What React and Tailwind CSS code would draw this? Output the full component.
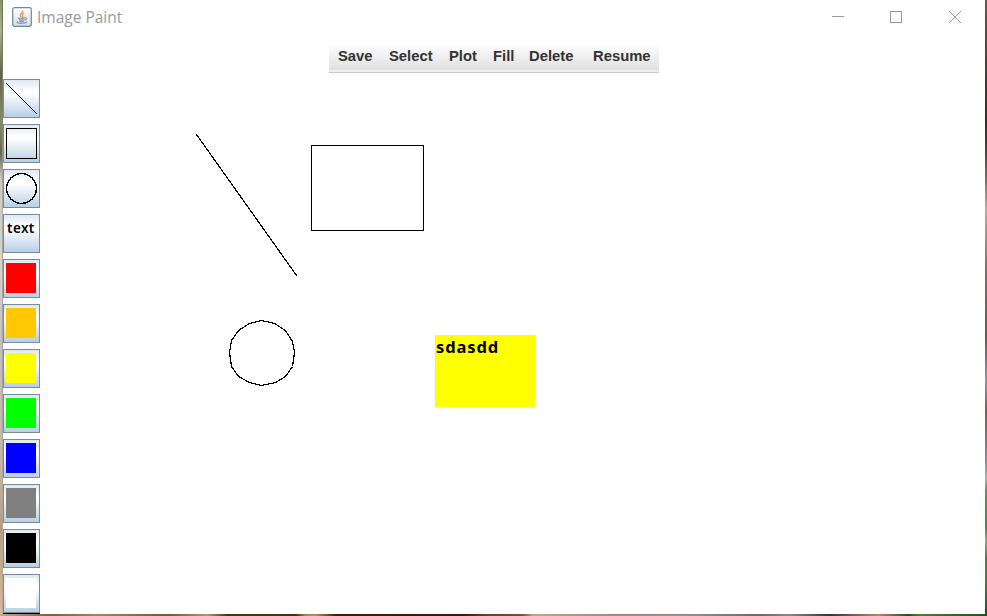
import React from "react";

const menuItems = [
  ["Save", "w-[51px]"],
  ["Select", "w-[60px]"],
  ["Plot", "w-[44px]"],
  ["Fill", "w-[36px]"],
  ["Delete", "w-[64px]"],
  ["Resume", "w-[59px]"],
];

const swatches = [
  ["Red", "bg-[#ff0000]"],
  ["Orange", "bg-[#ffc800]"],
  ["Yellow", "bg-[#ffff00]"],
  ["Green", "bg-[#00ff00]"],
  ["Blue", "bg-[#0000ff]"],
  ["Gray", "bg-[#808080]"],
  ["Black", "bg-black"],
  ["White", "bg-white"],
];

function ToolButton({ label, children }) {
  return (
    <button
      aria-label={label}
      className="flex h-[39px] w-[37px] shrink-0 items-start border border-[#7a8a99] bg-[linear-gradient(180deg,#dde8f3_0%,#ffffff_30%,#ffffff_36%,#b8cfe5_100%)] pl-[2px] pt-[3px] text-left"
    >
      {children}
    </button>
  );
}

function JavaIcon() {
  return (
    <svg width="20" height="20" viewBox="0 0 20 20" fill="none" className="shrink-0">
      <defs>
        <linearGradient id="tile" x1="0" y1="0" x2="0" y2="1">
          <stop stopColor="#ffffff" />
          <stop offset="1" stopColor="#d5dde4" />
        </linearGradient>
      </defs>
      <rect x=".7" y=".7" width="18.6" height="18.6" rx="2" fill="url(#tile)" stroke="#708999" strokeWidth="1.2" />
      <path d="M10.8 3.5c.7 2.2-3.7 3-2.3 5.3l1 1.5M12.2 6c-2.5 1.2-2.5 1.9-1.4 3.2.5.7 0 1.1-.5 1.6" stroke="#ed934d" strokeWidth="1.3" />
      <path d="M6 10.8c-1 .8 6.3.8 7.2 0M7 12.4c.5 1 4.7 1 5.5.2M7.3 14c.8.9 3.6.8 4.5.2M13.3 10.7c2.2-.2 1.6 2.2-.5 2.4M5.7 14.5c-3 1.3 2 2 6 1.6 2.4-.2 3.5-.8 2.8-1.3" stroke="#55829f" strokeWidth="1" />
    </svg>
  );
}

function TitleBar() {
  return (
    <header className="flex h-[34px] shrink-0 items-center pl-[9px] text-[#999999]">
      <JavaIcon />
      <h1 className="ml-[5px] whitespace-nowrap font-['Open_Sans','Noto_Sans',sans-serif] text-[15.5px] leading-5">
        Image Paint
      </h1>
      <div className="ml-auto flex items-center pr-[24px]">
        <svg className="mr-[46px]" width="12" height="12" shapeRendering="crispEdges"><path d="M0 5.5h12" stroke="currentColor" /></svg>
        <svg className="mr-[47px]" width="12" height="12" shapeRendering="crispEdges"><rect x=".5" y=".5" width="11" height="11" fill="none" stroke="currentColor" /></svg>
        <svg width="12" height="12"><path d="M0 0l12 12M12 0L0 12" stroke="currentColor" /></svg>
      </div>
    </header>
  );
}

export default function App() {
  return (
    <div className="flex h-[616px] w-[987px] flex-col overflow-hidden bg-white">
      <div className="flex h-[614px] shrink-0">
        <div className="w-[2px] bg-[linear-gradient(180deg,#7e9862_0%,#a6b18e_5%,#626249_12%,#8a8a6a_20%,#65664e_25%,#c8c8bf_29%,#d6d4cc_42%,#c2c0b9_56%,#c5b7a6_75%,#b89e80_86%,#d7b996_100%)]" />
        <div className="w-px bg-[linear-gradient(180deg,#657456_0%,#858573_20%,#aaa9a4_30%,#a3a3a0_60%,#b9a993_100%)]" />
        <main className="flex w-[982px] flex-col bg-white">
          <TitleBar />
          <nav className="ml-[326px] mt-[9px] flex h-[30px] w-[330px] shrink-0 items-start border-b border-[#c8c8c8] bg-[linear-gradient(180deg,#ffffff_0px,#dfdfdf_27px,#eeeeee_27px,#eeeeee_29px)] pl-[9px] pt-[4px] font-['Liberation_Sans',Arial,sans-serif] text-[14.8px] font-bold leading-[18px] text-[#333333]">
            {menuItems.map(([label, width]) => (
              <span key={label} className={"shrink-0 " + width}>{label}</span>
            ))}
          </nav>
          <div className="mt-[6px] flex h-[535px]">
            <aside className="flex w-[37px] shrink-0 flex-col">
              <div className="flex flex-col gap-[6px]">
                <ToolButton label="Line">
                  <svg width="32" height="32" shapeRendering="crispEdges"><path d="M.5 .5l30.6 30.6" stroke="#000" /></svg>
                </ToolButton>
                <ToolButton label="Rectangle">
                  <svg width="32" height="32" shapeRendering="crispEdges"><rect x=".5" y=".5" width="30" height="30" fill="none" stroke="#000" /></svg>
                </ToolButton>
                <ToolButton label="Circle">
                  <svg width="32" height="32" shapeRendering="crispEdges"><circle cx="15.5" cy="15.5" r="14.9" fill="none" stroke="#000" strokeWidth="1.4" /></svg>
                </ToolButton>
                <ToolButton label="Text">
                  <span className="pl-px pt-[3px] font-['Noto_Sans',sans-serif] text-[13.5px] font-semibold leading-[14px] tracking-[0.4px] text-black">text</span>
                </ToolButton>
                {swatches.map(([label, color]) => (
                  <ToolButton key={label} label={label}>
                    <span className={"size-[30px] " + color} />
                  </ToolButton>
                ))}
              </div>
              <div className="h-px shrink-0 bg-black" />
            </aside>
            <section className="relative w-[945px] shrink-0">
              <svg width="945" height="535" fill="none" stroke="#000" shapeRendering="crispEdges">
                <path d="M156.5 55.5L256.9 197" strokeWidth="1.2" />
                <rect x="271.5" y="66.5" width="112" height="85" />
                <path d="M221.5 241.5L234.5 244.5L245.5 251.5L252.5 262.5L254.5 273.5L252.5 287.5L245.5 297.5L235.5 303.5L221.5 306.5L209.5 303.5L198.5 297.5L191.5 287.5L189.5 273.5L191.5 261.5L198.5 251.5L209.5 244.5Z" strokeWidth="1.2" />
              </svg>
              <div className="absolute left-[395px] top-[256px] h-[72px] w-[100px] bg-[#ffff00] pl-px pt-[2px] font-['Noto_Sans',sans-serif] text-[16.5px] font-bold leading-5 tracking-[0.9px] text-black">
                sdasdd
              </div>
            </section>
          </div>
        </main>
        <div className="w-[2px] bg-[linear-gradient(180deg,#65594e_0%,#4c4036_10%,#312d28_20%,#4b4641_25%,#756d69_29%,#c1aaa0_34%,#806f67_44%,#615956_55%,#9694a0_62%,#6b625f_67%,#8d8991_75%,#aab69d_78%,#638e54_80%,#4c8941_86%,#93a974_88%,#458239_91%,#407b40_95%,#244d29_100%)]" />
      </div>
      <div className="h-[2px] shrink-0 bg-[linear-gradient(90deg,#c3aa8c_0%,#7a6044_5%,#9e8569_10%,#72583c_17%,#b09675_21%,#49371b_23%,#443016_30%,#a98352_31%,#b98d5e_32%,#421c10_34%,#3b1811_47%,#743630_49%,#884b40_53%,#b7a68e_54%,#a3888b_62%,#998b91_70%,#6d6769_77%,#8b858b_80%,#383437_84%,#b98179_89%,#244d28_92%,#55763b_93%,#244f25_100%)]" />
    </div>
  );
}
